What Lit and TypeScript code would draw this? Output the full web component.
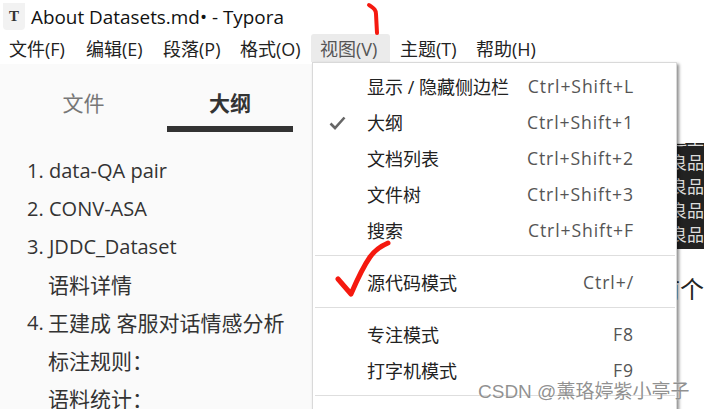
import { LitElement, html, css } from "lit";
import { customElement } from "lit/decorators.js";

type Item = { label: string; key: string; checked?: boolean };
const group1: Item[] = [
  { label: "显示 / 隐藏侧边栏", key: "Ctrl+Shift+L" },
  { label: "大纲", key: "Ctrl+Shift+1", checked: true },
  { label: "文档列表", key: "Ctrl+Shift+2" },
  { label: "文件树", key: "Ctrl+Shift+3" },
  { label: "搜索", key: "Ctrl+Shift+F" },
];
const group2: Item[] = [{ label: "源代码模式", key: "Ctrl+/" }];
const group3: Item[] = [
  { label: "专注模式", key: "F8" },
  { label: "打字机模式", key: "F9" },
];
const menus = ["文件(F)", "编辑(E)", "段落(P)", "格式(O)", "视图(V)", "主题(T)", "帮助(H)"];
const outline = [
  { n: "1.", t: "data-QA pair", cjk: false },
  { n: "2.", t: "CONV-ASA", cjk: false },
  { n: "3.", t: "JDDC_Dataset", cjk: false },
  { n: "", t: "语料详情", cjk: true },
  { n: "4.", t: "王建成 客服对话情感分析", cjk: true },
  { n: "", t: "标注规则：", cjk: true },
  { n: "", t: "语料统计：", cjk: true },
];
const ghostRows = ["追上", "良品", "良品", "良品", "良品"];

@customElement("app-root")
export class AppRoot extends LitElement {
  static styles = css`
    :host { display: block; width: 704px; height: 409px; overflow: hidden; position: relative; background: #fff; font-family: "Open Sans", "Noto Sans CJK SC", sans-serif; color: #222; }
    .title { height: 34px; display: flex; align-items: center; padding-left: 3px; gap: 6px; font-size: 18.9px; color: #111; }
    .logo { width: 22px; height: 27px; margin-top: -2px; background: #f2f2f2; border-radius: 0 0 4px 4px; display: flex; align-items: center; justify-content: center; font: bold 15px "Liberation Serif", serif; color: #333; }
    .menubar { height: 30px; display: flex; padding-left: 3px; font-size: 18px; color: #222; }
    .menu { width: 77px; padding-left: 6px; box-sizing: border-box; display: flex; align-items: center; white-space: nowrap; border-radius: 3px 3px 0 0; height: 28px; }
    .menu.open { background: #ebebeb; color: #555; width: 79px; padding-left: 9px; }
    .menu.open + .menu { width: 80px; padding-left: 10px; }
    .body { display: flex; height: 345px; }
    .side { width: 312px; background: #fafafa; }
    .tabs { display: flex; height: 87px; }
    .tab { display: flex; flex-direction: column; align-items: center; font-size: 21px; line-height: 30px; color: #777; padding-top: 24px; }
    .tab.a { width: 167px; }
    .tab.b { width: 126px; color: #333; font-weight: 700; }
    .tab.b::after { content: ""; width: 126px; height: 6px; background: #333; margin-top: 8px; }
    .ol { padding: 0 0 0 27px; font-size: 20px; color: #333; display: flex; flex-direction: column; }
    .row { height: 38px; flex: none; display: flex; align-items: center; }
    .num { width: 22px; flex: none; }
    .row .cjk { font-size: 21px; margin-left: -1px; }
    .main { flex: 1; background: #fff; }
    .ghost { position: absolute; right: 0; top: 143px; width: 27px; height: 106px; background: #222; color: #ddd; font-size: 17px; overflow: hidden; }
    .ghost div { height: 24px; line-height: 24px; display: flex; justify-content: flex-end; white-space: nowrap; }
    .ghost div:first-child { margin-top: -16px; }
    .ghost-ge { position: absolute; right: 0; top: 275px; font-size: 24px; color: #222; line-height: 28px; white-space: nowrap; }
    .dd { position: absolute; left: 312px; top: 62px; width: 365px; height: 360px; background: #fff; border: 1px solid #d9d9d9; border-bottom: none; box-shadow: 2px 2px 3px rgba(0,0,0,.45); box-sizing: border-box; padding-top: 6px; }
    .mi { height: 36px; box-sizing: border-box; display: flex; align-items: center; position: relative; font-size: 18px; color: #222; padding: 0 42px 2px 54px; justify-content: space-between; }
    .mi .k { color: #555; font-size: 17.6px; letter-spacing: .9px; }
    .check { position: absolute; left: 16px; top: 11px; }
    hr { border: none; border-top: 1px solid #dedede; margin: 6px 1px 9px 2px; }
    .ink { position: absolute; left: 0; top: 0; pointer-events: none; }
    .wm { position: absolute; left: 478px; top: 376px; font-family: "Liberation Sans", "Noto Sans CJK SC", sans-serif; font-size: 19px; color: rgba(125,125,125,.85); white-space: nowrap; text-shadow: 0 0 1px #fff; }
  `;

  private item(i: Item) {
    return html`<div class="mi">
      ${i.checked
        ? html`<svg class="check" width="18" height="14" viewBox="0 0 18 14"><path d="M1.5 7.5 L6 12 L15.5 1.5" fill="none" stroke="#666" stroke-width="2.6"/></svg>`
        : ""}
      <span>${i.label}</span><span class="k">${i.key}</span>
    </div>`;
  }

  render() {
    return html`
      <div class="title"><div class="logo">T</div><span>About Datasets.md• - Typora</span></div>
      <div class="menubar">
        ${menus.map((m, i) => html`<div class="menu ${i === 4 ? "open" : ""}">${m}</div>`)}
      </div>
      <div class="body">
        <div class="side">
          <div class="tabs"><div class="tab a">文件</div><div class="tab b">大纲</div></div>
          <div class="ol">
            ${outline.map((o) => html`<div class="row"><span class="num">${o.n}</span><span class="${o.cjk ? "cjk" : ""}">${o.t}</span></div>`)}
          </div>
        </div>
        <div class="main"></div>
      </div>
      <div class="ghost">${ghostRows.map((r) => html`<div>${r}</div>`)}</div>
      <div class="ghost-ge">前个</div>
      <div class="dd">
        ${group1.map((i) => this.item(i))}
        <hr />
        ${group2.map((i) => this.item(i))}
        <hr />
        ${group3.map((i) => this.item(i))}
        <hr />
      </div>
      <svg class="ink" width="704" height="409" viewBox="0 0 704 409">
        <path d="M369 5 C373 8 376 9 376 14 L377 33" fill="none" stroke="#f5190f" stroke-width="4" stroke-linecap="round" />
        <path d="M338 279 L351 294 C357 280 363 267 370 257 C375 250 381 246 388 243" fill="none" stroke="#f5190f" stroke-width="5" stroke-linecap="round" stroke-linejoin="round" />
      </svg>
      <div class="wm">CSDN @薰珞婷紫小亭子</div>
    `;
  }
}
